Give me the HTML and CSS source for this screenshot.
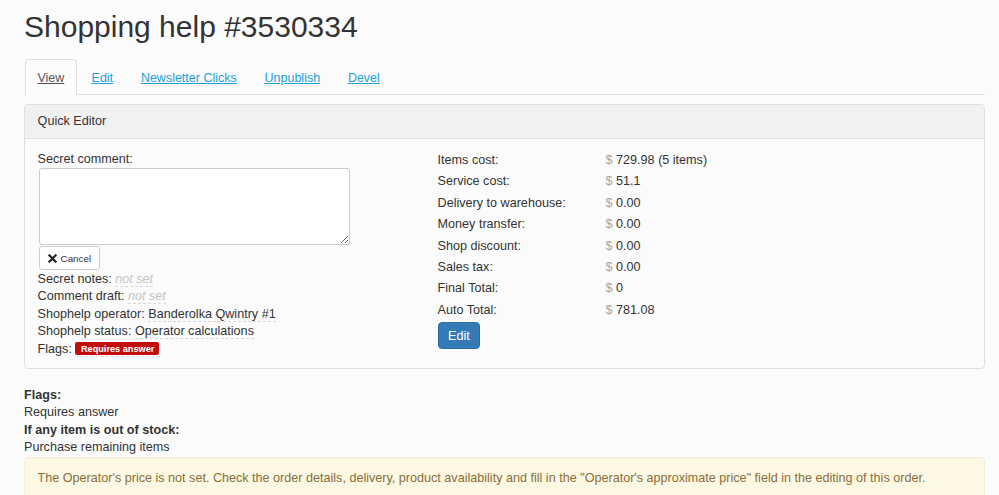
FILE: index.html
```html
<!DOCTYPE html>
<html>
<head>
<meta charset="utf-8">
<link rel="stylesheet" href="styles.css">
</head>
<body>
<div class="page">
  <h1 class="title">Shopping help #3530334</h1>
  <ul class="tabs">
    <li class="tab active"><a href="#">View</a></li>
    <li class="tab"><a href="#">Edit</a></li>
    <li class="tab"><a href="#">Newsletter Clicks</a></li>
    <li class="tab"><a href="#">Unpublish</a></li>
    <li class="tab"><a href="#">Devel</a></li>
  </ul>

  <div class="panel">
    <div class="panel-heading">Quick Editor</div>
    <div class="panel-body">
      <div class="col-left">
        <div class="field-label">Secret comment:</div>
        <textarea class="comment"></textarea>
        <button class="btn-cancel"><svg class="x-icon" viewBox="0 0 10 10" width="9" height="9"><path d="M1.5 1.5 L8.5 8.5 M8.5 1.5 L1.5 8.5" stroke="#222" stroke-width="2.4" stroke-linecap="square"/></svg>Cancel</button>
        <div class="info-row">Secret notes: <span class="editable empty">not set</span></div>
        <div class="info-row">Comment draft: <span class="editable empty">not set</span></div>
        <div class="info-row">Shophelp operator: <span class="editable">Banderolka Qwintry #1</span></div>
        <div class="info-row">Shophelp status: <span class="editable">Operator calculations</span></div>
        <div class="info-row">Flags: <span class="editable badge-wrap"><span class="badge">Requires answer</span></span></div>
      </div>
      <div class="col-right">
        <div class="cost-row"><span class="cost-label">Items cost:</span><span class="cost-val"><span class="cur">$</span> 729.98 (5 items)</span></div>
        <div class="cost-row"><span class="cost-label">Service cost:</span><span class="cost-val"><span class="cur">$</span> 51.1</span></div>
        <div class="cost-row"><span class="cost-label">Delivery to warehouse:</span><span class="cost-val"><span class="cur">$</span> 0.00</span></div>
        <div class="cost-row"><span class="cost-label">Money transfer:</span><span class="cost-val"><span class="cur">$</span> 0.00</span></div>
        <div class="cost-row"><span class="cost-label">Shop discount:</span><span class="cost-val"><span class="cur">$</span> 0.00</span></div>
        <div class="cost-row"><span class="cost-label">Sales tax:</span><span class="cost-val"><span class="cur">$</span> 0.00</span></div>
        <div class="cost-row"><span class="cost-label">Final Total:</span><span class="cost-val"><span class="cur">$</span> 0</span></div>
        <div class="cost-row"><span class="cost-label">Auto Total:</span><span class="cost-val"><span class="cur">$</span> 781.08</span></div>
        <button class="btn-edit">Edit</button>
      </div>
    </div>
  </div>

  <div class="summary">
    <div class="sum-title">Flags:</div>
    <div>Requires answer</div>
    <div class="sum-title">If any item is out of stock:</div>
    <div>Purchase remaining items</div>
  </div>

  <div class="alert">The Operator's price is not set. Check the order details, delivery, product availability and fill in the "Operator's approximate price" field in the editing of this order.</div>
</div>
</body>
</html>
```

FILE: styles.css
```css
html, body {
  margin: 0;
  padding: 0;
  background: #fbfbfb;
}
body {
  font-family: "Liberation Sans", Arial, Helvetica, sans-serif;
  font-size: 12.6px;
  line-height: 18px;
  color: #333;
  overflow: hidden;
}
.page {
  padding: 10px 14px 0 24px;
}
.title {
  margin: 0;
  font-size: 30px;
  line-height: 33px;
  font-weight: normal;
  color: #333;
}
.tabs {
  list-style: none;
  margin: 16px 0 0 0;
  padding: 0;
  display: flex;
  border-bottom: 1px solid #e2e0e2;
}
.tab {
  margin: 0 2px -1px 0;
}
.tab a {
  display: block;
  padding: 9px 11.9px 7px;
  border: 1px solid transparent;
  border-bottom: 0;
  border-radius: 4px 4px 0 0;
  color: #22a0d8;
  text-decoration: underline;
  line-height: 18px;
  font-size: 12.5px;
}
.tab.active {
  margin-left: 1px;
}
.tab.active a {
  color: #555;
  border-color: #e0dfe0;
  background: #fcfcfc;
  padding-bottom: 8px;
  padding-left: 11.4px;
  padding-right: 11.4px;
}
.panel {
  margin-top: 9px;
  border: 1px solid #e2dfe0;
  border-radius: 4px;
  background: #fbfbfb;
}
.panel-heading {
  background: #f2f1f2;
  border-bottom: 1px solid #e2dfe0;
  border-radius: 3px 3px 0 0;
  padding: 7px 12.6px 8px;
  color: #333;
}
.panel-body {
  display: flex;
  padding: 12px 12.6px 10px;
}
.col-left {
  width: 400px;
  flex: none;
}
.col-right {
  flex: 1;
}
.field-label {
  line-height: 17px;
}
.comment {
  display: block;
  box-sizing: border-box;
  width: 311px;
  height: 77px;
  margin: 0 0 0 1px;
  border: 1px solid #ccc;
  border-radius: 3px;
  background: #fff;
  font: inherit;
  padding: 4px;
}
.btn-cancel {
  display: flex;
  align-items: center;
  gap: 4px;
  margin: 1px 0 1px 1px;
  height: 24px;
  box-sizing: border-box;
  padding: 0 8px 0 8px;
  border: 1px solid #ccc;
  border-radius: 3px;
  background: #fff;
  color: #333;
  font-family: "Liberation Sans", Arial, sans-serif;
  font-size: 9.8px;
}
.x-icon {
  display: block;
}
.info-row {
  line-height: 17.4px;
}
.editable {
  border-bottom: 1px dashed #d8d8d8;
}
.editable.empty {
  color: #c4c4c4;
  font-style: italic;
}
.badge-wrap {
  padding-right: 1px;
}
.badge {
  display: inline-block;
  background: #c20d0d;
  color: #fff;
  font-weight: bold;
  font-size: 9.2px;
  line-height: 10px;
  padding: 1.5px 5px 1.5px 5.5px;
  border-radius: 2px;
  vertical-align: 1px;
}
.cost-row {
  display: flex;
  line-height: 18px;
  margin-bottom: 3.4px;
}
.cost-label {
  width: 168px;
  flex: none;
}
.cur {
  color: #a5a5a5;
}
.btn-edit {
  display: block;
  margin-top: 0.5px;
  height: 27px;
  padding: 0 9.5px;
  border: 1px solid #2e6da4;
  border-radius: 4px;
  background: #337ab7;
  color: #fff;
  font-family: "Liberation Sans", Arial, sans-serif;
  font-size: 12.6px;
}
.summary {
  margin-top: 18px;
  line-height: 17.4px;
}
.sum-title {
  font-weight: bold;
}
.alert {
  margin-top: 0;
  border: 1px solid #f8edd2;
  border-radius: 4px;
  background: #fcf8e3;
  color: #8a6d3b;
  padding: 11px 12.6px 20px;
  line-height: 18px;
}
```
